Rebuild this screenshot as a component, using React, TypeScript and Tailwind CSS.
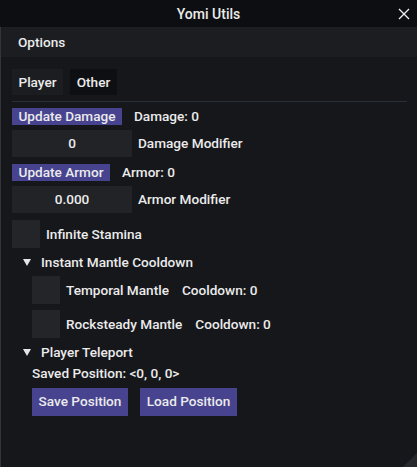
import React from 'react';

const Checkbox = () => <div className="w-[28px] h-[28px] bg-[#232528] shrink-0" />;

const SmallButton = ({ label, w }: { label: string; w: string }) => (
  <div className={`h-[17px] bg-[#47438f] flex items-center justify-center ${w}`}>{label}</div>
);

const Arrow = () => (
  <svg width="8" height="7" viewBox="0 0 8 7" className="shrink-0">
    <path d="M0 0 L8 0 L4 7 Z" fill="#e6e6e6" />
  </svg>
);

export default function App() {
  return (
    <div
      className="relative w-[417px] h-[467px] bg-[#16171b] overflow-hidden text-[13.6px] font-medium text-[#ebebeb] leading-none"
      style={{ fontFamily: 'Roboto, "Liberation Sans", sans-serif' }}
    >
      {/* window border */}
      <div className="absolute left-0 top-0 bottom-0 w-px bg-[#34353a]" />

      {/* title bar */}
      <div className="relative h-[27px] bg-[#0d0e11] flex items-center justify-center text-[14px] pt-px">
        Yomi Utils
        <svg className="absolute right-[7px] top-[8px]" width="12" height="12" viewBox="0 0 12 12">
          <path d="M1 1 L11 11 M11 1 L1 11" stroke="#f2f2f2" strokeWidth="1.3" />
        </svg>
      </div>

      {/* menu bar */}
      <div className="h-[30px] bg-[#1c1d21] flex items-center pl-[18px] pt-px">Options</div>

      <div className="px-[12px] pt-[12px]">
        {/* tabs */}
        <div className="flex gap-[7px] h-[26px]">
          <div className="w-[51px] bg-[#1c1d21] flex items-center justify-center pt-px">Player</div>
          <div className="w-[47px] bg-[#0e0f12] flex items-center justify-center pt-px">Other</div>
        </div>
        <div className="mt-[6px] h-px bg-[#27303a] w-[395px]" />

        <div className="mt-[6px] flex items-center gap-[12px]">
          <SmallButton label="Update Damage" w="w-[110px]" />
          <span>Damage: 0</span>
        </div>

        <div className="mt-[5px] flex items-center gap-[6px]">
          <div className="w-[120px] h-[27px] bg-[#212326] flex items-center justify-center pt-px">0</div>
          <span className="pt-px">Damage Modifier</span>
        </div>

        <div className="mt-[7px] flex items-center gap-[12px]">
          <SmallButton label="Update Armor" w="w-[98px]" />
          <span>Armor: 0</span>
        </div>

        <div className="mt-[5px] flex items-center gap-[6px]">
          <div className="w-[120px] h-[27px] bg-[#212326] flex items-center justify-center pt-px">0.000</div>
          <span className="pt-px">Armor Modifier</span>
        </div>

        <div className="mt-[7px] flex items-center gap-[6px]">
          <Checkbox />
          <span className="pt-px">Infinite Stamina</span>
        </div>

        <div className="mt-[8px] h-[12px] flex items-center pl-[11px] gap-[10px]">
          <Arrow />
          <span className="pt-px">Instant Mantle Cooldown</span>
        </div>

        <div className="pl-[20px]">
          <div className="mt-[8px] flex items-center gap-[6px]">
            <Checkbox />
            <span className="pt-px">Temporal Mantle</span>
            <span className="ml-[7px] pt-px">Cooldown: 0</span>
          </div>
          <div className="mt-[6px] flex items-center gap-[6px]">
            <Checkbox />
            <span className="pt-px">Rocksteady Mantle</span>
            <span className="ml-[7px] pt-px">Cooldown: 0</span>
          </div>
        </div>

        <div className="mt-[8px] h-[12px] flex items-center pl-[11px] gap-[10px]">
          <Arrow />
          <span className="pt-px">Player Teleport</span>
        </div>

        <div className="pl-[20px]">
          <div className="mt-[9px]">Saved Position: &lt;0, 0, 0&gt;</div>
          <div className="mt-[7px] flex gap-[12px]">
            <div className="w-[96px] h-[28px] bg-[#47438f] flex items-center justify-center pt-px">Save Position</div>
            <div className="w-[97px] h-[28px] bg-[#47438f] flex items-center justify-center pt-px">Load Position</div>
          </div>
        </div>
      </div>

      {/* resize grip */}
      <svg className="absolute right-0 bottom-0" width="16" height="16" viewBox="0 0 16 16">
        <path d="M16 2 L16 16 L2 16 Z" fill="#25282d" />
      </svg>
    </div>
  );
}
